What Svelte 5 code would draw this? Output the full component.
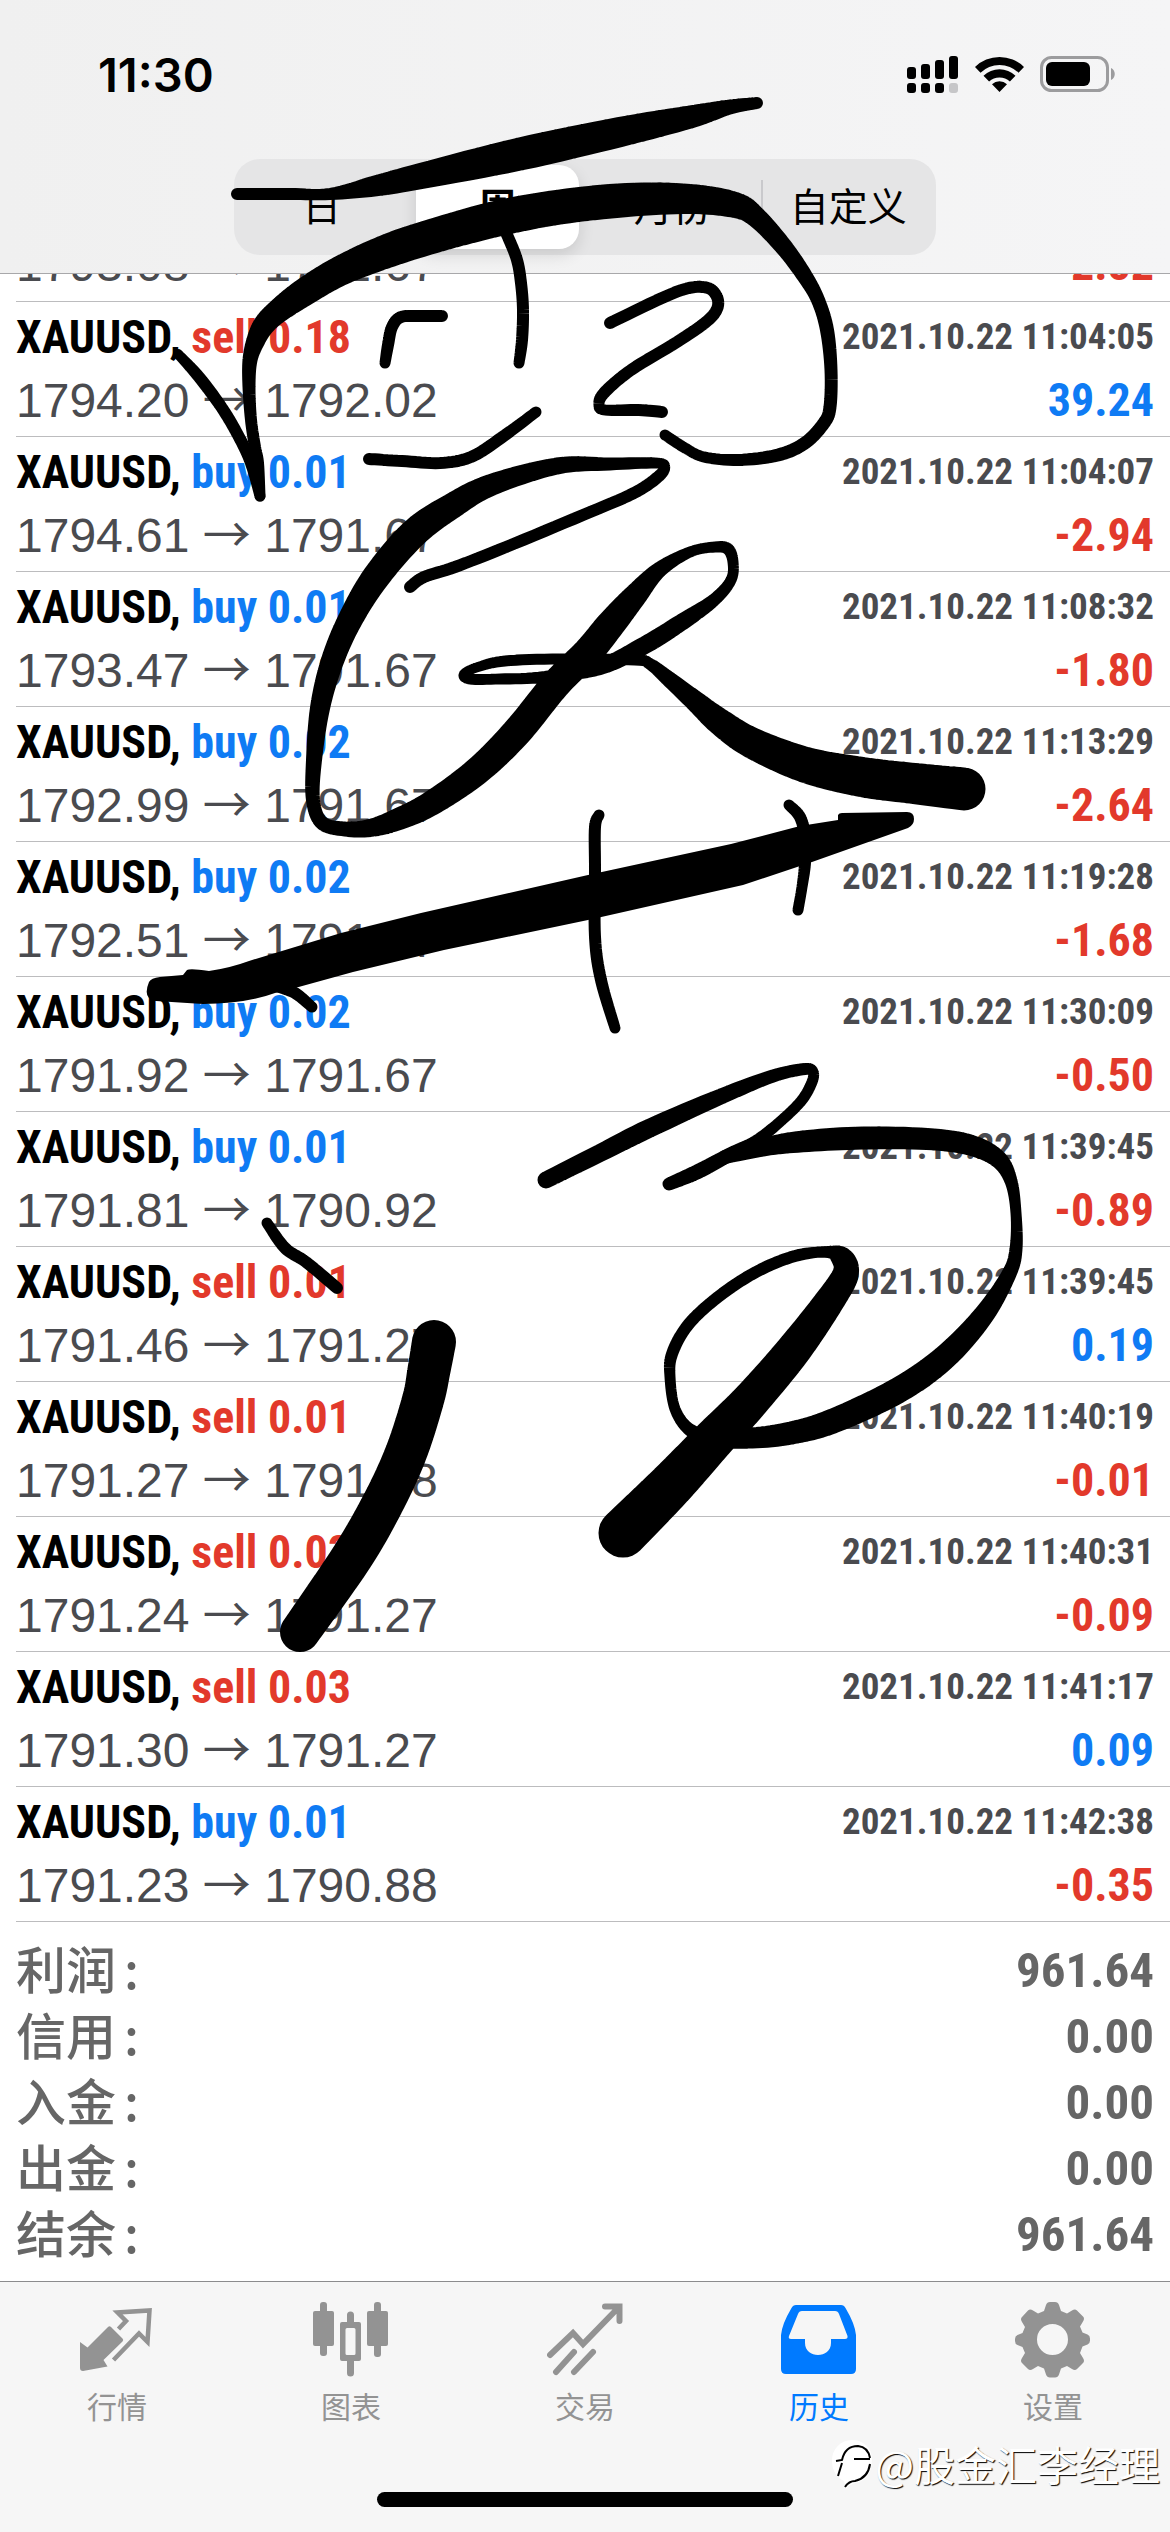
<script>
  const periods = ['日', '周', '月份', '自定义'];
  let period = $state('周');

  const deals = [
    ['sell', '0.18', '1794.20', '1792.02', '11:04:05', '39.24'],
    ['buy', '0.01', '1794.61', '1791.67', '11:04:07', '-2.94'],
    ['buy', '0.01', '1793.47', '1791.67', '11:08:32', '-1.80'],
    ['buy', '0.02', '1792.99', '1791.67', '11:13:29', '-2.64'],
    ['buy', '0.02', '1792.51', '1791.67', '11:19:28', '-1.68'],
    ['buy', '0.02', '1791.92', '1791.67', '11:30:09', '-0.50'],
    ['buy', '0.01', '1791.81', '1790.92', '11:39:45', '-0.89'],
    ['sell', '0.01', '1791.46', '1791.27', '11:39:45', '0.19'],
    ['sell', '0.01', '1791.27', '1791.28', '11:40:19', '-0.01'],
    ['sell', '0.03', '1791.24', '1791.27', '11:40:31', '-0.09'],
    ['sell', '0.03', '1791.30', '1791.27', '11:41:17', '0.09'],
    ['buy', '0.01', '1791.23', '1790.88', '11:42:38', '-0.35'],
  ].map(([side, lot, open, close, time, profit]) => ({ side, lot, open, close, time, profit }));

  const totals = [
    ['利润', '961.64'],
    ['信用', '0.00'],
    ['入金', '0.00'],
    ['出金', '0.00'],
    ['结余', '961.64'],
  ];

  const tabs = [
    ['quotes', '行情'],
    ['chart', '图表'],
    ['trade', '交易'],
    ['history', '历史'],
    ['settings', '设置'],
  ];

  // Pen strokes: each point is x, y, pen width.
  const strokes = [
    [[237,194,12],[290,194,12],[330,194,12],[375,186,21],[421,176,26],[520,154,33],[620,132,30],[690,117,23],[730,107,15],[757,103,12]],
    [[178,354,10],[199,377,12],[222,408,12],[239,437,12],[251,463,12],[260,496,11]],
    [[260,496,11],[258,463,12],[255,447,12],[251,420,12],[249,387,13],[250,360,15],[256,340,19],[264,325,22],[277,312,24],[303,293,28],[340,271,30],[390,250,34],[440,234,35],[500,218,36],[560,207,35],[627,200,34],[690,199,30],[735,205,26],[756,217,21],[783,246,18],[804,275,16],[818,300,14],[827,330,14],[831,370,13],[830,407,13],[824,423,13],[805,443,13],[778,455,13],[738,460,12],[704,457,11],[685,448,11],[665,435,11]],
    [[498,215,12],[508,237,12],[517,260,12],[521,283,12],[523,310,12],[522,340,12],[519,363,11]],
    [[385,363,11],[388,345,12],[392,327,12],[401,317,12],[420,316,12],[442,316,12]],
    [[369,459,12],[402,461,12],[440,463,12],[471,457,12],[501,438,12],[536,412,11]],
    [[610,323,12],[662,298,12],[689,288,12],[708,288,12],[717,297,12],[717,309,12],[706,322,12],[677,342,12],[631,370,12],[604,393,12],[599,405,11],[605,410,11],[639,410,12],[662,412,12]],
    [[410,587,12],[424,577,12],[455,567,12],[506,547,12],[583,515,12],[634,493,12],[659,476,12],[665,466,10],[655,463,11],[610,464,13],[557,466,17],[491,485,22],[452,506,26],[414,533,29],[376,577,28],[350,620,25],[332,662,23],[320,708,20],[314,760,16],[313,800,14],[322,823,14],[345,829,15],[370,828,18],[396,820,22],[430,804,25],[476,772,28],[516,733,30],[556,684,30],[588,652,30],[611,624,29],[634,597,24],[659,570,16],[690,552,11],[715,547,11],[728,549,12],[733,562,11],[731,580,11],[714,600,13],[682,622,17],[645,645,18],[600,667,16],[545,677,12],[500,679,11],[470,679,11],[464,674,10],[478,667,10],[505,661,11],[560,659,11],[635,660,11],[650,664,12],[670,680,16],[695,701,21],[720,722,27],[752,743,31],[806,765,36],[862,777,40],[910,783,41],[964,789,43]],
    [[599,815,11],[595,827,12],[595,870,12],[595,937,12],[601,980,12],[615,1028,11]],
    [[789,805,11],[800,817,12],[805,837,12],[805,863,12],[802,887,11],[798,910,11]],
    [[278,987,11],[295,993,12],[312,1007,11]],
    [[546,1180,17],[600,1153,18],[650,1128,19],[722,1096,16],[773,1076,13],[805,1069,12],[813,1072,11],[812,1082,11],[802,1100,11],[782,1120,11],[756,1141,12],[731,1154,14],[697,1172,15],[669,1184,13]],
    [[725,1157,14],[769,1146,19],[808,1141,22],[863,1138,23],[927,1139,22],[970,1145,21],[998,1159,18],[1011,1181,13],[1016,1213,11],[1016,1249,13],[1009,1274,15],[983,1316,21],[944,1358,25],[897,1391,26],[833,1421,25],[791,1433,23],[752,1438,21],[714,1438,18],[690,1430,13],[675,1409,11],[670,1377,11],[672,1354,12],[688,1325,12],[718,1297,12],[756,1272,12],[795,1256,12],[828,1252,12],[842,1258,22],[846,1272,26],[835,1293,29],[796,1347,35],[752,1399,38],[713,1440,42],[671,1485,46],[623,1533,49]],
    [[267,1223,11],[285,1248,12],[306,1262,12],[337,1288,12]],
    [[434,1342,44],[429,1370,43],[423,1400,42],[406,1453,42],[383,1503,42],[352,1557,42],[300,1632,40]],
  ];

  function spline(a, b, c, d, t) {
    return 0.5 * (2 * b + (c - a) * t + (2 * a - 5 * b + 4 * c - d) * t * t + (3 * b - a - 3 * c + d) * t * t * t);
  }

  // One closed outline: a disc at each sample and a quad between neighbours.
  function outline(points) {
    const samples = [];
    for (let i = 0; i < points.length - 1; i++) {
      const p = [points[Math.max(0, i - 1)], points[i], points[i + 1], points[Math.min(points.length - 1, i + 2)]];
      for (let s = 0; s < 8; s++) samples.push([0, 1, 2].map((k) => spline(p[0][k], p[1][k], p[2][k], p[3][k], s / 8)));
    }
    samples.push(points[points.length - 1]);
    const f = (n) => n.toFixed(2);
    let d = '';
    samples.forEach(([x, y, w], i) => {
      const r = Math.round(w * 50) / 100;
      d += `M${f(x - r)} ${f(y)}a${f(r)} ${f(r)} 0 0 1 ${f(2 * r)} 0a${f(r)} ${f(r)} 0 0 1 ${f(-2 * r)} 0z`;
      const next = samples[i + 1];
      if (!next) return;
      const len = Math.hypot(next[0] - x, next[1] - y) || 1;
      const nx = -(next[1] - y) / len;
      const ny = (next[0] - x) / len;
      const q = next[2] / 2;
      d += `M${f(x - nx * r)} ${f(y - ny * r)}L${f(next[0] - nx * q)} ${f(next[1] - ny * q)}L${f(next[0] + nx * q)} ${f(next[1] + ny * q)}L${f(x + nx * r)} ${f(y + ny * r)}z`;
    });
    return d;
  }

  const ink = strokes.map(outline);
</script>

<div class="screen">
  <header>
    <div class="status">
      <span class="clock">11:30</span>
      <svg class="signals" viewBox="0 0 210 40" aria-hidden="true">
        <g>
          <rect x="0" y="12" width="9" height="12" rx="3" />
          <rect x="14" y="9" width="9" height="15" rx="3" />
          <rect x="28" y="5" width="9" height="19" rx="3" />
          <rect x="42" y="1" width="9" height="23" rx="3" />
          <rect x="0" y="28" width="9" height="10" rx="3" />
          <rect x="14" y="28" width="9" height="10" rx="3" />
          <rect x="28" y="28" width="9" height="10" rx="3" />
          <rect x="42" y="28" width="9" height="10" rx="3" fill="#c6c6c8" />
        </g>
        <path d="M68 12a35 35 0 0 1 49 0l-5.500 5.800a27 27 0 0 0-38 0zM76.500 20.800a23 23 0 0 1 32 0l-5.600 5.800a15 15 0 0 0-20.800 0zM85 29.300a11 11 0 0 1 15 0l-7.500 7.700z" />
        <rect x="134.500" y="2.500" width="66" height="33" rx="10" fill="none" stroke="#9c9c9e" stroke-width="3" />
        <rect x="139" y="7" width="44" height="24" rx="6" />
        <path d="M204 13c5 2 5 10 0 12z" fill="#9c9c9e" />
      </svg>
    </div>
    <div class="segments">
      {#each periods as name}
        <button class:on={period === name} onclick={() => (period = name)}><span>{name}</span></button>
      {/each}
    </div>
  </header>

  <main>
    <div class="cut">
      <div class="line"><span class="price">1793.08 <i>→</i> 1791.67</span><b class="sum neg">-2.82</b></div>
    </div>
    <ul>
      {#each deals as deal}
        <li>
          <div class="line">
            <b class="name">XAUUSD, <span class={deal.side}>{deal.side} {deal.lot}</span></b>
            <time>2021.10.22 {deal.time}</time>
          </div>
          <div class="line">
            <span class="price">{deal.open} <i>→</i> {deal.close}</span>
            <b class="sum" class:neg={deal.profit.startsWith('-')}>{deal.profit}</b>
          </div>
        </li>
      {/each}
    </ul>
    <dl>
      {#each totals as [label, value]}
        <div><dt>{label}<span>:</span></dt><dd>{value}</dd></div>
      {/each}
    </dl>
  </main>

  <footer>
    <nav>
      {#each tabs as [id, label]}
        <a href="#{id}" class:active={id === 'history'}>
          <svg viewBox="0 0 76 76" aria-hidden="true">
            {#if id === 'quotes'}
              <path d="M1 40l7.500 5.500L29 25q1.500-1.500 3 0l11.500 11.500q1.500 1.500 0 3L24.500 58l4 6.500L4 69q-3 0-3-3z" />
              <path d="M39.500 27l7.500-8-8.500-8.500L70.500 8.500l-2 31.500-8.500-8.500L34.500 58" fill="none" stroke="currentColor" stroke-width="4.500" />
            {:else if id === 'chart'}
              <rect x="0" y="9" width="21" height="35" rx="2" />
              <rect x="7" y="0" width="7" height="54" rx="3" />
              <rect x="54" y="9" width="21" height="35" rx="2" />
              <rect x="61" y="0" width="7" height="55" rx="3" />
              <path fill-rule="evenodd" d="M29 20h5v-7a3.500 3.500 0 0 1 7 0v7h5q2 0 2 2v35q0 2-2 2h-5v12a3.500 3.500 0 0 1-7 0V59h-5q-2 0-2-2V22q0-2 2-2zM34 26q-1.500 0-1.500 1.500v24q0 1.500 1.500 1.500h7q1.500 0 1.500-1.500v-24q0-1.500-1.500-1.500z" />
            {:else if id === 'trade'}
              <path d="M3 53l23-22 10 11L72 5M58 4.500h14.500V19M9 70l18-20M27 70l19-20" fill="none" stroke="currentColor" stroke-width="6" stroke-linecap="round" />
            {:else if id === 'history'}
              <path fill-rule="evenodd" d="M15 3h45q3 0 4.500 3Q74 22 75 33v34q0 5-5 5H5q-5 0-5-5V33Q1 22 10.500 6 12 3 15 3zM21 9q-3 0-4 3L8 34q-1 3 2 3h14v4c0 16 26 16 26 0v-4h14q3 0 2.500-3L58 12q-1-3-4-3z" />
            {:else}
              <path fill-rule="evenodd" d="M31 3q1-3 4-3h5q3 0 4 3l2 6 6 2.500 5-3q3-2 5 0l6 6q2 2 0 5l-3 5 2.500 6 5 2q2.500 1 2.500 4v2q0 3-2.500 4l-5 2L65 51l3 5q2 3 0 5l-6 6q-2 2-5 0l-5-3-6 2.500-2 6q-1 3-4 3h-5q-3 0-4-3l-2-6L23 64l-5 3q-3 2-5 0l-6-6q-2-2 0-5l3-5-2.500-6-5-2Q0 42 0 39v-2q0-3 2.500-4l5-2L10 25l-3-5q-2-3 0-5l6-6.500q2-2 5 0l5 3L29 9zM37.500 22a15.500 15.500 0 1 0 0 31 15.500 15.500 0 0 0 0-31z" />
            {/if}
          </svg>
          <span>{label}</span>
        </a>
      {/each}
    </nav>
    <div class="credit">
      <svg viewBox="0 0 44 52" aria-hidden="true">
        <path d="M21 3a19 19 0 0 1 20 19q0 20-16 24-6 1-10 6l-2-8A21 21 0 0 1 1 24 20 20 0 0 1 21 3z" fill="#fff" />
        <path d="M5 24l6-1Q14 9 27 9q10 1 12 12M23 22h16M11 26L7 39M39 27q-2 14-15 17-6 0-10 6" fill="none" stroke="#000" stroke-width="2" />
      </svg>
      <span>@股金汇李经理</span>
    </div>
    <div class="home"></div>
  </footer>

  <svg class="ink" viewBox="0 0 1170 2532" aria-hidden="true">
    {#each ink as d}<path {d} />{/each}
    <path d="M149 982Q151 978 160 977L183 975 187 970Q190 968 209 971 230 968 249 961L341 933 421 913 588 875 731 844 800 826 838 820V815Q839 813 842 813L907 812Q914 812 914 819 914 825 908 828L812 862 743 885 588 920 444 950 353 972 295 988 275 993Q245 1004 203 1004L156 1001Q142 999 149 982z" />
  </svg>
</div>

<style>
  :global(body) {
    background: #fff;
  }
  .screen {
    position: relative;
    display: flex;
    flex-direction: column;
    min-height: 100vh;
    overflow: hidden;
    background: #fff;
    font-family: 'Liberation Sans', 'Noto Sans CJK SC', sans-serif;
    color: #4a4b4f;
  }
  header {
    display: flex;
    flex-direction: column;
    align-items: center;
    gap: 56px;
    padding: 47px 0 18px;
    background: linear-gradient(90deg, #f0f0f0, #f5f5f6);
    border-bottom: 1px solid #a8a8aa;
  }
  .status {
    display: flex;
    align-self: stretch;
    justify-content: space-between;
    align-items: center;
    height: 56px;
    padding: 0 53px 0 98px;
    color: #000;
  }
  .clock {
    font: 600 47px/56px Inter, sans-serif;
  }
  .signals {
    width: 210px;
    height: 40px;
  }
  .segments {
    display: grid;
    grid-template-columns: repeat(4, 1fr);
    width: 60%;
    height: 96px;
    border-radius: 26px;
    background: #e5e5e6;
  }
  button {
    padding: 6px;
    border: 0;
    background: none;
    color: #000;
    font: 400 39px/78px 'Noto Sans CJK SC', sans-serif;
  }
  button span {
    display: block;
    padding-bottom: 6px;
    border-radius: 20px;
  }
  button.on {
    font-weight: 700;
  }
  button.on span {
    background: #fff;
    box-shadow: 0 6px 16px rgb(0 0 0 / 0.12);
  }
  button:last-child {
    background: linear-gradient(#c9c9cc, #c9c9cc) left / 2px 54px no-repeat;
  }
  main {
    flex: 1;
  }
  ul,
  dl,
  dd {
    margin: 0;
    padding: 0;
    list-style: none;
  }
  .cut {
    display: flex;
    flex-direction: column;
    justify-content: flex-end;
    box-sizing: border-box;
    height: 28px;
    margin-left: 16px;
    padding: 0 16px 6px 0;
    overflow: hidden;
    border-bottom: 1px solid #bcbcbe;
  }
  li {
    box-sizing: border-box;
    height: 135px;
    margin-left: 16px;
    padding: 3px 16px 0 0;
    border-bottom: 1px solid #bcbcbe;
  }
  .line {
    display: flex;
    flex: none;
    justify-content: space-between;
    align-items: center;
    height: 63px;
    white-space: nowrap;
  }
  .name,
  .sum,
  time,
  dd {
    font-family: 'Roboto Condensed', 'Open Sans Condensed', Roboto, sans-serif;
    font-weight: 700;
  }
  .name,
  .sum {
    font-size: 46px;
  }
  .name {
    color: #000;
  }
  .price {
    font-size: 48px;
  }
  .price i {
    font-family: 'Noto Sans CJK SC', sans-serif;
    font-style: normal;
    line-height: 1;
  }
  time {
    font-size: 37px;
  }
  .buy,
  .sum {
    color: #0f7bf4;
  }
  .sell,
  .sum.neg {
    color: #e2392b;
  }
  dl {
    padding: 16px 16px 0;
  }
  dl div {
    display: flex;
    justify-content: space-between;
    height: 66px;
    line-height: 66px;
    color: #666;
  }
  dt {
    font: 500 50px/58px 'Noto Sans CJK SC', sans-serif;
  }
  dt span {
    padding-left: 8px;
  }
  dd {
    font-size: 49px;
  }
  footer {
    display: flex;
    flex-direction: column;
    box-sizing: border-box;
    height: 251px;
    background: #f6f6f6;
    border-top: 1px solid #8c8c8e;
  }
  nav {
    display: grid;
    grid-template-columns: repeat(5, 1fr);
    height: 154px;
    padding-top: 20px;
    box-sizing: border-box;
  }
  a {
    display: flex;
    flex-direction: column;
    align-items: center;
    gap: 8px;
    color: #939393;
    text-decoration: none;
    font: 400 30px/38px 'Noto Sans CJK SC', sans-serif;
  }
  a.active {
    color: #007aff;
  }
  a svg {
    width: 76px;
    height: 76px;
  }
  svg {
    display: block;
    fill: currentColor;
  }
  .credit {
    display: flex;
    align-self: flex-end;
    align-items: center;
    height: 54px;
    margin-bottom: 2px;
    padding-right: 10px;
    color: #fff;
    font: 400 41px/54px 'Noto Sans CJK SC', sans-serif;
    text-shadow: 1px 1px 1px #000;
  }
  .credit svg {
    width: 44px;
    height: 52px;
  }
  .home {
    align-self: center;
    width: 416px;
    height: 15px;
    border-radius: 8px;
    background: #000;
  }
  .ink {
    position: absolute;
    top: 0;
    left: 0;
    width: 100%;
    color: #000;
    pointer-events: none;
  }
</style>
